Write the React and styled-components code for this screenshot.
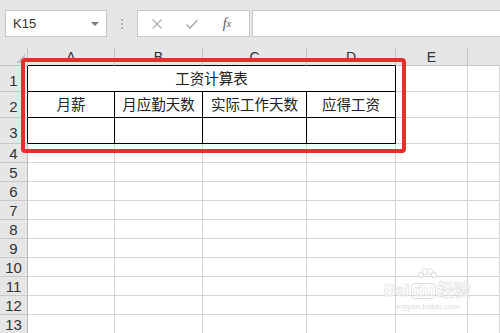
import React from "react";
import styled, { createGlobalStyle } from "styled-components";

const Global = createGlobalStyle`
  html, body { margin: 0; padding: 0; background: #fff; }
  body { font-family: "Liberation Sans", "Noto Sans CJK SC", sans-serif; overflow: hidden; }
  * { box-sizing: border-box; }
`;

const Page = styled.div`
  position: relative;
  width: 500px;
  height: 333px;
  overflow: hidden;
  background: #fff;
`;

const Toolbar = styled.div`
  height: 48px;
  background: #e6e6e6;
  display: flex;
  align-items: flex-start;
  padding: 10px 0 0 5px;
`;

const NameBox = styled.div`
  width: 102px;
  height: 27px;
  background: #fff;
  border: 1px solid #c8c8c8;
  display: flex;
  align-items: center;
  justify-content: space-between;
  padding: 0 7px 0 7px;
  font-size: 13px;
  color: #333;
`;

const Caret = styled.span`
  width: 0;
  height: 0;
  border-left: 4px solid transparent;
  border-right: 4px solid transparent;
  border-top: 4px solid #7a7a7a;
`;

const Dots = styled.div`
  width: 30px;
  height: 27px;
  display: flex;
  flex-direction: column;
  align-items: center;
  justify-content: center;
  gap: 2px;
  & > i {
    width: 2px;
    height: 2px;
    background: #b4b4b4;
    display: block;
  }
`;

const FxBox = styled.div`
  width: 113px;
  height: 27px;
  background: #fff;
  border: 1px solid #c8c8c8;
  display: flex;
  align-items: center;
  padding: 0 0 0 12px;
`;

const FxIcon = styled.span`
  width: ${(p) => p.w}px;
  display: flex;
  justify-content: center;
  align-items: center;
  color: ${(p) => p.c};
  font-family: "Liberation Serif", serif;
  font-style: italic;
  font-size: 14px;
`;

const FormulaInput = styled.div`
  flex: 1;
  height: 27px;
  margin-left: 2px;
  background: #fff;
  border: 1px solid #c8c8c8;
  border-right: none;
`;

const Grid = styled.div`
  display: grid;
  grid-template-columns: 28px 87px 88px 104px 89px 72px 1fr;
  grid-template-rows: 18px 26px 26px 26px repeat(10, 19px);
`;

const ColHead = styled.div`
  background: #e6e6e6;
  border-right: 1px solid ${(p) => (p.last ? "transparent" : "#c4c4c4")};
  border-bottom: 1px solid ${(p) => (p.dark ? "#000" : "#c4c4c4")};
  display: flex;
  align-items: center;
  justify-content: center;
  font-size: 14px;
  color: #333;
`;

const Corner = styled.div`
  position: relative;
  background: #e6e6e6;
  border-right: 1px solid #c4c4c4;
  border-bottom: 1px solid #c4c4c4;
  &::after {
    content: "";
    position: absolute;
    right: 2px;
    bottom: 2px;
    width: 0;
    height: 0;
    border-left: 9px solid transparent;
    border-bottom: 9px solid #c2c2c2;
  }
`;

const RowHead = styled.div`
  background: #e6e6e6;
  border-right: 1px solid ${(p) => (p.dark ? "#000" : "#b8b8b8")};
  border-bottom: 1px solid #c8c8c8;
  display: flex;
  align-items: flex-end;
  justify-content: center;
  font-size: 15px;
  line-height: 17px;
  padding-bottom: ${(p) => (p.tall ? 2 : 0)}px;
  color: #333;
`;

const Cell = styled.div`
  grid-column: span ${(p) => p.span || 1};
  border-right: 1px solid ${(p) => (p.dark ? "#000" : "#d4d4d4")};
  border-bottom: 1px solid ${(p) => (p.dark ? "#000" : "#d4d4d4")};
  display: flex;
  align-items: flex-end;
  justify-content: center;
  padding-bottom: ${(p) => p.pb || 0}px;
  font-family: "Noto Sans CJK SC", "Liberation Sans", sans-serif;
  font-size: 14.5px;
  line-height: 18px;
  color: #222;
  white-space: nowrap;
`;

const Highlight = styled.div`
  position: absolute;
  left: 21px;
  top: 58px;
  width: 385px;
  height: 95px;
  border: 4px solid #e3302b;
  border-radius: 4px;
  pointer-events: none;
`;

const Watermark = styled.div`
  position: absolute;
  left: 382px;
  top: 268px;
  width: 90px;
  display: flex;
  flex-direction: column;
  align-items: center;
  pointer-events: none;
`;

const WmLogo = styled.div`
  display: flex;
  align-items: center;
  font-family: "Liberation Sans", "Noto Sans CJK SC", sans-serif;
  font-weight: bold;
  font-size: 17px;
  line-height: 18px;
  -webkit-text-stroke: 0.6px #dcdcdc;
  color: rgba(255, 255, 255, 0.7);
`;

const WmDu = styled.span`
  border: 1.5px solid #dedede;
  border-radius: 4px;
  padding: 0 1px;
  line-height: 14px;
  margin: 0 1px;
`;

const WmSub = styled.div`
  font-family: "Liberation Sans", sans-serif;
  font-size: 8px;
  color: #dcdcdc;
  margin-top: 2px;
`;

const cols = ["A", "B", "C", "D", "E", ""];

export default function App() {
  const rows = [];
  for (let r = 4; r <= 13; r++) {
    rows.push(
      <React.Fragment key={r}>
        <RowHead>{r}</RowHead>
        {cols.map((c, i) => (
          <Cell key={i} />
        ))}
      </React.Fragment>
    );
  }
  return (
    <Page>
      <Global />
      <Toolbar>
        <NameBox>
          <span>K15</span>
          <Caret />
        </NameBox>
        <Dots>
          <i />
          <i />
          <i />
        </Dots>
        <FxBox>
          <FxIcon w={14} c="#b0b0b0">
            <svg width="12" height="12" viewBox="0 0 12 12">
              <path d="M1.5 1.5 L10.5 10.5 M10.5 1.5 L1.5 10.5" stroke="#b0b0b0" strokeWidth="1.3" fill="none" />
            </svg>
          </FxIcon>
          <FxIcon w={56} c="#b0b0b0">
            <svg width="14" height="12" viewBox="0 0 14 12">
              <path d="M1.5 6.5 L5 10 L12.5 2" stroke="#b0b0b0" strokeWidth="1.6" fill="none" />
            </svg>
          </FxIcon>
          <FxIcon w={14} c="#555">
            f<span style={{ fontSize: 10 }}>x</span>
          </FxIcon>
        </FxBox>
        <FormulaInput />
      </Toolbar>
      <Grid>
        <Corner />
        {cols.map((c, i) => (
          <ColHead key={i} dark={i < 4} last={i === 5}>
            {c}
          </ColHead>
        ))}

        <RowHead dark tall>1</RowHead>
        <Cell dark span={4} pb={4}>工资计算表</Cell>
        <Cell />
        <Cell />

        <RowHead dark tall>2</RowHead>
        <Cell dark pb={4}>月薪</Cell>
        <Cell dark pb={4}>月应勤天数</Cell>
        <Cell dark pb={4}>实际工作天数</Cell>
        <Cell dark pb={4}>应得工资</Cell>
        <Cell />
        <Cell />

        <RowHead dark tall>3</RowHead>
        <Cell dark />
        <Cell dark />
        <Cell dark />
        <Cell dark />
        <Cell />
        <Cell />

        {rows}
      </Grid>
      <Highlight />
      <Watermark>
        <svg width="24" height="14" viewBox="0 0 24 14">
          <g fill="rgba(255,255,255,0.7)" stroke="#dcdcdc" strokeWidth="1">
            <ellipse cx="6" cy="7" rx="2.5" ry="3" />
            <ellipse cx="10" cy="3.5" rx="2.5" ry="3" />
            <ellipse cx="15" cy="3.5" rx="2.5" ry="3" />
            <ellipse cx="19" cy="7" rx="2.5" ry="3" />
          </g>
        </svg>
        <WmLogo>
          Bai<WmDu>du</WmDu>经验
        </WmLogo>
        <WmSub>jingyan.baidu.com</WmSub>
      </Watermark>
    </Page>
  );
}
